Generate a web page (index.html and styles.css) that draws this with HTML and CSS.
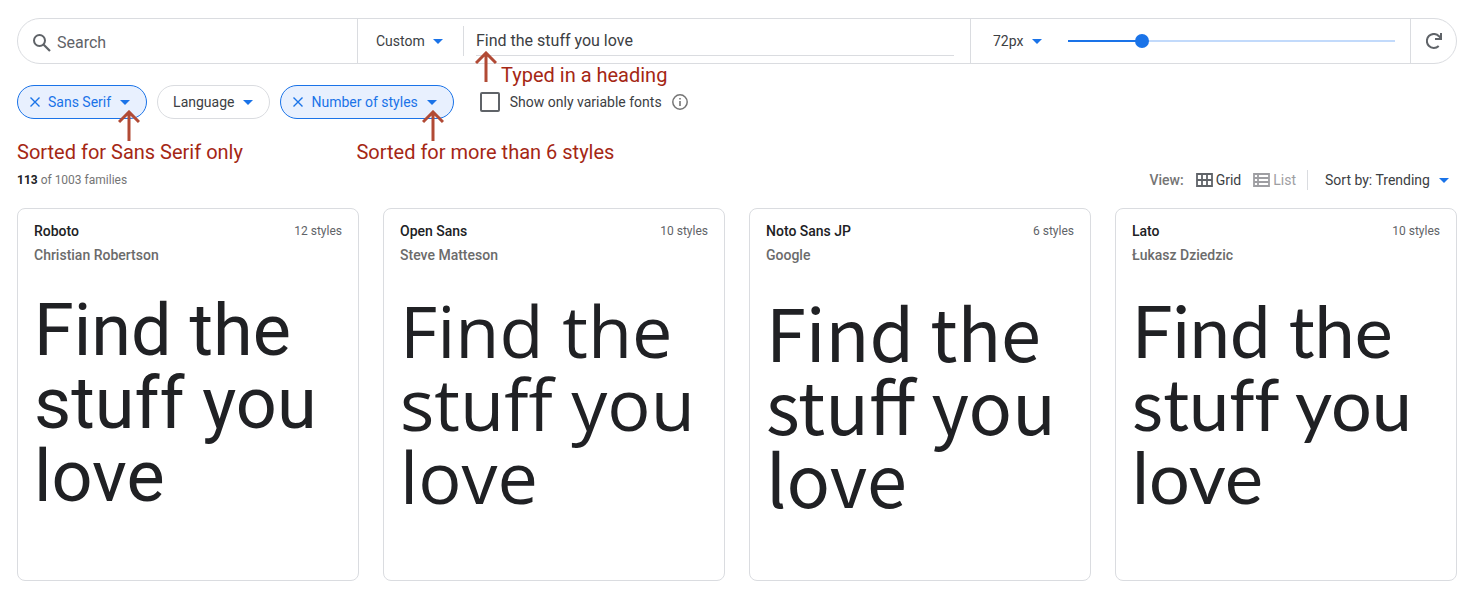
FILE: index.html
```html
<!DOCTYPE html>
<html lang="en">
<head>
<meta charset="utf-8">
<title>Browse fonts</title>
<link rel="stylesheet" href="styles.css">
</head>
<body>
<svg class="sprite" aria-hidden="true">
  <symbol id="caret" viewBox="0 0 10 5"><path d="M0 0h10L5 5z" fill="currentColor"/></symbol>
  <symbol id="close" viewBox="0 0 10 10"><path d="M.5.5l9 9M9.500.5l-9 9" stroke="currentColor" stroke-width="1.400" fill="none"/></symbol>
  <symbol id="arrow" viewBox="0 0 22 31"><path d="M11 31V2M1 12L11 2l10 10" stroke="currentColor" stroke-width="3" fill="none"/></symbol>
</svg>
<main class="page">
  <form class="toolbar">
    <label class="search">
      <svg class="search-icon" viewBox="0 0 18 18" aria-hidden="true"><circle cx="6.500" cy="6.500" r="5.500" fill="none" stroke="currentColor" stroke-width="2"/><path d="M10.500 10.500l6.500 6.500" stroke="currentColor" stroke-width="2.200"/></svg>
      <input class="field" type="text" placeholder="Search" aria-label="Search fonts">
    </label>
    <div class="preview-tools">
      <span class="dropdown dropdown-type">
        <select aria-label="Preview type"><option>Custom</option></select>
        <svg class="caret" aria-hidden="true"><use href="#caret"/></svg>
      </span>
      <div class="typed">
        <input class="field typed-field" type="text" value="Find the stuff you love" aria-label="Preview text">
        <div class="note note-typed"><svg class="arrow" aria-hidden="true"><use href="#arrow"/></svg><span>Typed in a heading</span></div>
      </div>
    </div>
    <div class="size-tools">
      <span class="dropdown">
        <select aria-label="Font size"><option>72px</option></select>
        <svg class="caret" aria-hidden="true"><use href="#caret"/></svg>
      </span>
      <input class="slider" type="range" min="8" max="306" value="72" aria-label="Font size slider">
    </div>
    <button class="reset" type="reset" aria-label="Reset">
      <svg class="reset-icon" viewBox="0 0 16 16" aria-hidden="true"><path d="M12.700 13A7 7 0 1 1 13 3.200L15 5.500" fill="none" stroke="currentColor" stroke-width="2"/><path d="M16 0v7H9V5h5V0z" fill="currentColor"/></svg>
    </button>
  </form>

  <div class="filters">
    <div class="chip chip-on">
      <button type="button" aria-label="Remove Sans Serif"><svg class="close" aria-hidden="true"><use href="#close"/></svg></button>
      <button type="button">Sans Serif<svg class="caret" aria-hidden="true"><use href="#caret"/></svg></button>
      <div class="note note-chip note-sans"><svg class="arrow" aria-hidden="true"><use href="#arrow"/></svg><span>Sorted for Sans Serif only</span></div>
    </div>
    <div class="chip">
      <button type="button">Language<svg class="caret" aria-hidden="true"><use href="#caret"/></svg></button>
    </div>
    <div class="chip chip-on">
      <button type="button" aria-label="Remove Number of styles"><svg class="close" aria-hidden="true"><use href="#close"/></svg></button>
      <button type="button">Number of styles<svg class="caret" aria-hidden="true"><use href="#caret"/></svg></button>
      <div class="note note-chip note-styles"><svg class="arrow" aria-hidden="true"><use href="#arrow"/></svg><span>Sorted for more than 6 styles</span></div>
    </div>
    <label class="variable"><input class="tick" type="checkbox">Show only variable fonts</label>
    <svg class="info" viewBox="0 0 16 16" role="img" aria-label="About variable fonts"><circle cx="8" cy="8" r="7.200" fill="none" stroke="currentColor" stroke-width="1.500"/><path d="M8 7v5M8 4v1.600" stroke="currentColor" stroke-width="1.600"/></svg>
  </div>

  <div class="summary">
    <p class="count"><strong>113</strong> of 1003 families</p>
    <div class="view">
      <span class="view-label">View:</span>
      <button class="mode" type="button" aria-pressed="true"><svg class="mode-icon" viewBox="0 0 17 14" aria-hidden="true"><path d="M1 1h15v12H1zM1 7h15M6 1v12M11 1v12" fill="none" stroke="currentColor" stroke-width="1.800"/></svg>Grid</button>
      <button class="mode mode-off" type="button" aria-pressed="false"><svg class="mode-icon" viewBox="0 0 17 14" aria-hidden="true"><path d="M1 1h15v12H1zM1 5h15M1 9h15M5 1v12" fill="none" stroke="currentColor" stroke-width="1.800"/></svg>List</button>
    </div>
    <span class="dropdown dropdown-sort">
      <select aria-label="Sort order"><option>Sort by: Trending</option></select>
      <svg class="caret" aria-hidden="true"><use href="#caret"/></svg>
    </span>
  </div>

  <section class="cards">
    <article class="card">
      <header class="card-head"><h2>Roboto</h2><span>12 styles</span></header>
      <p class="author">Christian Robertson</p>
      <p class="sample sample-roboto">Find the stuff you love</p>
    </article>
    <article class="card">
      <header class="card-head"><h2>Open Sans</h2><span>10 styles</span></header>
      <p class="author">Steve Matteson</p>
      <p class="sample sample-open">Find the stuff you love</p>
    </article>
    <article class="card">
      <header class="card-head"><h2>Noto Sans JP</h2><span>6 styles</span></header>
      <p class="author">Google</p>
      <p class="sample sample-noto">Find the stuff you love</p>
    </article>
    <article class="card">
      <header class="card-head"><h2>Lato</h2><span>10 styles</span></header>
      <p class="author">Łukasz Dziedzic</p>
      <p class="sample sample-lato">Find the stuff you love</p>
    </article>
  </section>
</main>
</body>
</html>
```
FILE: styles.css
```css
* { box-sizing: border-box; }
body {
  margin: 0;
  background: #fff;
  color: #3c4043;
  font: 14px/20px Roboto, sans-serif;
}
h2, p { margin: 0; }
button, input, select {
  margin: 0;
  padding: 0;
  border: 0;
  background: none;
  color: inherit;
  font: inherit;
}
.sprite { position: absolute; width: 0; height: 0; }
.page { padding: 18px 21px 13px 17px; }

.toolbar {
  display: grid;
  grid-template-columns: 339fr 613fr 440fr 46px;
  height: 46px;
  border: 1px solid #dadce0;
  border-radius: 23px;
}
.toolbar > * + * { border-left: 1px solid #dadce0; }
.field { width: 100%; min-width: 0; font-size: 16px; line-height: 24px; outline: 0; }
.search { display: flex; align-items: center; gap: 6px; padding: 3px 16px 0 15px; }
.search-icon { flex: none; width: 18px; height: 18px; color: #5f6368; }
.search .field::placeholder { color: #5f6368; opacity: 1; }

.dropdown { display: grid; align-items: center; }
.dropdown select { grid-area: 1 / 1; appearance: none; padding-right: 18px; outline: 0; }
.dropdown .caret { grid-area: 1 / 1; justify-self: end; pointer-events: none; }
.caret { flex: none; width: 10px; height: 5px; color: #1a73e8; }

.preview-tools { display: flex; align-items: center; padding: 0 16px 0 18px; }
.dropdown-type { height: 30px; padding-right: 20px; border-right: 1px solid #dadce0; }
.typed { position: relative; flex: 1; margin-left: 12px; }
.typed-field { display: block; height: 30px; border-bottom: 1px solid #dadce0; }

.size-tools { display: flex; align-items: center; gap: 26px; padding: 0 15px 0 22px; }
.slider {
  flex: 1;
  min-width: 0;
  height: 14px;
  appearance: none;
  background: linear-gradient(to right, #1a73e8 22%, #c2dafb 22%) center / 100% 2px no-repeat;
}
.slider::-webkit-slider-thumb {
  appearance: none;
  width: 14px;
  height: 14px;
  border-radius: 50%;
  background: #1a73e8;
}
.reset { display: grid; place-items: center; color: #5f6368; }
.reset-icon { width: 16px; height: 16px; }

.filters { display: flex; align-items: center; gap: 10px; margin-top: 21px; }
.chip {
  position: relative;
  display: flex;
  gap: 8px;
  height: 34px;
  padding: 0 16px 0 15px;
  border: 1px solid #dadce0;
  border-radius: 17px;
}
.chip button { display: flex; align-items: center; gap: 9px; }
.chip-on { padding-left: 12px; border-color: #1a73e8; background: #e8f0fe; color: #1a73e8; }
.close { width: 10px; height: 10px; }
.variable { display: flex; align-items: center; gap: 10px; margin-left: 16px; }
.tick { appearance: none; width: 20px; height: 20px; border: 2px solid #5f6368; border-radius: 2px; }
.info { width: 16px; height: 16px; color: #757575; }

.note { position: absolute; z-index: 1; color: #a52714; font-size: 20px; line-height: 22px; white-space: nowrap; pointer-events: none; }
.arrow { display: block; width: 22px; height: 31px; color: #b14a35; }
.note-typed { top: 25px; left: -1px; display: flex; gap: 4px; }
.note-typed span { padding-top: 13px; }
.note-chip { top: 24px; }
.note-sans { left: -1px; }
.note-sans .arrow { margin-left: 101px; }
.note-styles { left: 75px; }
.note-styles .arrow { margin-left: 66px; }

.summary { display: flex; align-items: center; height: 24px; margin: 49px 0 16px; padding-right: 8px; }
.count { margin-right: auto; color: #757575; font-size: 12px; }
.count strong { color: #202124; }
.view { display: flex; align-items: center; gap: 12px; padding-right: 11px; border-right: 1px solid #dadce0; }
.view-label { color: #757575; font-weight: 500; }
.mode { display: flex; align-items: center; gap: 3px; }
.mode-icon { width: 17px; height: 14px; color: #5f6368; }
.mode-off, .mode-off .mode-icon { color: #9e9ea2; }
.dropdown-sort { margin-left: 17px; }

.cards { display: grid; grid-template-columns: repeat(4, 1fr); gap: 24px; }
.card { min-height: 373px; padding: 10px 16px; border: 1px solid #dadce0; border-radius: 8px; }
.card-head { display: flex; justify-content: space-between; line-height: 24px; }
.card-head h2 { color: #202124; font-size: 14px; font-weight: 500; }
.card-head span { color: #5f6368; font-size: 12px; }
.author { color: #6b6b6b; font-weight: 500; line-height: 24px; }
.sample { margin-top: 27px; color: #202124; font-size: 72px; line-height: 73px; }
.sample-roboto { font-family: Roboto, sans-serif; }
.sample-open { font-family: "Open Sans", sans-serif; }
.sample-noto { font-family: "Noto Sans CJK JP", sans-serif; }
.sample-lato { font-family: Lato, sans-serif; font-variant-ligatures: none; }
```
